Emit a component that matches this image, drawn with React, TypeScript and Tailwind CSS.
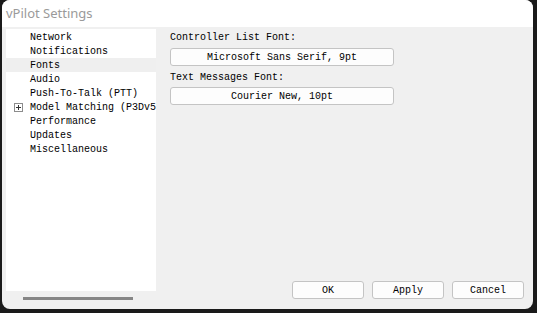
import React from 'react';

const items = [
  'Network',
  'Notifications',
  'Fonts',
  'Audio',
  'Push-To-Talk (PTT)',
  'Model Matching (P3Dv5',
  'Performance',
  'Updates',
  'Miscellaneous',
];

const mono = { fontFamily: '"Liberation Mono", "DejaVu Sans Mono", monospace' };

function WinButton({ label, className }: { label: string; className: string }) {
  return (
    <div
      className={`h-[18px] flex items-center justify-center rounded-[3px] border border-[#c4c4c4] bg-[#fdfdfd] text-[10px] text-black ${className}`}
      style={mono}
    >
      {label}
    </div>
  );
}

export default function App() {
  return (
    <div className="w-[537px] h-[313px] bg-[#1a1a1a] overflow-hidden">
      <div className="ml-[2px] w-[531px] h-[309px] rounded-[8px] bg-[#f0f0f0] overflow-hidden flex flex-col">
        <div className="h-[27px] bg-white flex items-center pl-[4px] text-[13px] text-[#9a9a9a]" style={{ fontFamily: '"Noto Sans", "Open Sans", sans-serif' }}>
          vPilot Settings
        </div>
        <div className="flex flex-1 pl-[4px] pt-[2px]">
          <div className="flex flex-col">
            <div className="w-[150px] h-[262px] bg-white pt-[1px] overflow-hidden" style={mono}>
              {items.map((it) => (
                <div
                  key={it}
                  className={`relative h-[14px] flex items-center pl-[24px] text-[10px] whitespace-nowrap text-black ${it === 'Fonts' ? 'bg-[#efefef]' : ''}`}
                >
                  {it.startsWith('Model') && (
                    <span className="absolute left-[8px] top-[3px] w-[9px] h-[9px] border border-[#8c8c8c] bg-white">
                      <span className="absolute left-[1px] top-[3px] w-[5px] h-[1px] bg-[#333]" />
                      <span className="absolute left-[3px] top-[1px] w-[1px] h-[5px] bg-[#333]" />
                    </span>
                  )}
                  {it}
                </div>
              ))}
            </div>
            <div className="h-[3px] w-[110px] ml-[17px] mt-[6px] bg-[#868686]" />
          </div>
          <div className="ml-[14px] flex flex-col flex-1 pr-[8px]">
            <div className="text-[10px] text-black mt-[2px] h-[13px] leading-[13px]" style={mono}>Controller List Font:</div>
            <WinButton label="Microsoft Sans Serif, 9pt" className="w-[224px] mt-[4px]" />
            <div className="text-[10px] text-black mt-[5px] h-[13px] leading-[13px]" style={mono}>Text Messages Font:</div>
            <WinButton label="Courier New, 10pt" className="w-[224px] mt-[3px]" />
            <div className="flex-1" />
            <div className="flex justify-end gap-[8px] mb-[10px] pr-[1px]">
              <WinButton label="OK" className="w-[72px]" />
              <WinButton label="Apply" className="w-[72px]" />
              <WinButton label="Cancel" className="w-[72px]" />
            </div>
          </div>
        </div>
      </div>
    </div>
  );
}
